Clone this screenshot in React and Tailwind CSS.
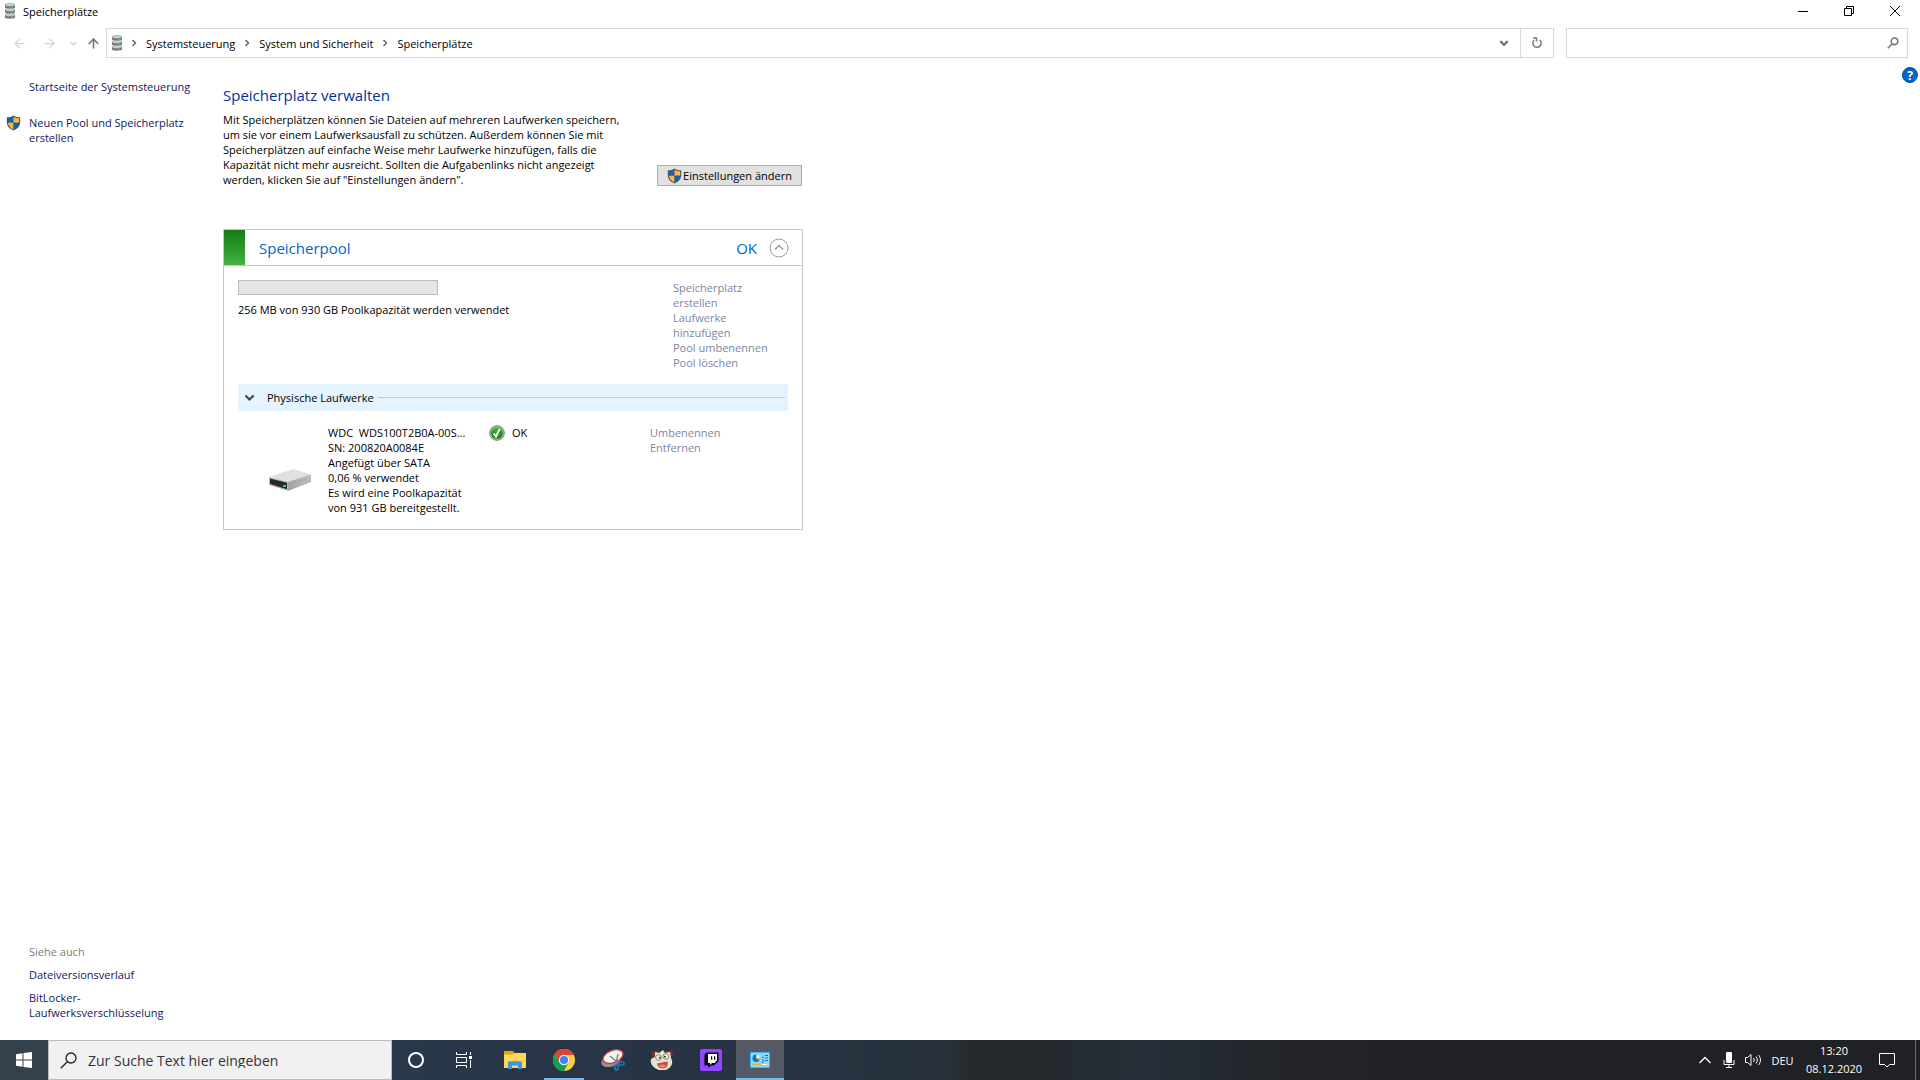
import { ArrowLeft, ArrowRight, ArrowUp } from "lucide-react";

const Stack = () => (
  <svg width="12" height="16" viewBox="0 0 12 16" className="shrink-0" aria-hidden="true">
    {[0, 5, 10].map((y) => (
      <g key={y} transform={`translate(0 ${y})`}>
        <path d="M1 2v2.600c0 1.600 10 1.600 10 0V2z" fill="#77797f" />
        <ellipse cx="6" cy="1.900" rx="5" ry="1.400" fill="#d5d6d9" stroke="#85878b" strokeWidth=".6" />
        <rect x="7" y="3.600" width="2" height="1.200" fill="#35d635" />
      </g>
    ))}
  </svg>
);

const Shield = () => (
  <svg width="15" height="16" viewBox="0 0 15 16" className="shrink-0" aria-hidden="true">
    <path d="M7.500.5C6 1.800 3.500 2.300.8 2.300V7c0 4.200 2.700 6.700 6.700 8.500C11.500 13.700 14.200 11.200 14.200 7V2.300C11.500 2.300 9 1.800 7.500.5z" fill="#4d555c" />
    <path d="M7.500 1.700C6 2.700 4 3.200 1.900 3.300V7.700H7.500z" fill="#0f63bd" />
    <path d="M7.500 1.700C9 2.700 11 3.200 13.100 3.300V7.700H7.500z" fill="#fdba38" />
    <path d="M1.900 7.700C2.200 10.700 4.200 12.800 7.500 14.400V7.700z" fill="#fdba38" />
    <path d="M13.100 7.700C12.800 10.700 10.800 12.800 7.500 14.400V7.700z" fill="#0f63bd" />
  </svg>
);

const Chevron = ({ d, size = 8, color = "#666", width = 1.5 }) => (
  <svg width={size} height={size} viewBox="0 0 8 8" fill="none" stroke={color} strokeWidth={width} className="shrink-0" aria-hidden="true">
    <path d={d} />
  </svg>
);

const DOWN = "M1 2.500l3 3 3-3";
const RIGHT = "M2.500 1l3 3-3 3";

const OkBadge = () => (
  <svg width="16" height="16" viewBox="0 0 16 16" className="shrink-0" aria-hidden="true">
    <defs>
      <linearGradient id="ok" x1="0" y1="0" x2="0" y2="1">
        <stop offset="0" stopColor="#4fc53a" />
        <stop offset=".5" stopColor="#1f9a17" />
        <stop offset="1" stopColor="#1d8614" />
      </linearGradient>
    </defs>
    <circle cx="8" cy="8" r="7.300" fill="#b9bdba" stroke="#777b78" />
    <circle cx="8" cy="8" r="6" fill="url(#ok)" />
    <path d="M4.700 8.500l2.300 3 3.700-7.500" fill="none" stroke="#fff" strokeWidth="2" />
  </svg>
);

const Drive = () => (
  <svg width="44" height="24" viewBox="0 0 44 24" className="shrink-0" aria-hidden="true">
    <defs>
      <linearGradient id="side" x1="0" y1="0" x2="1" y2="0">
        <stop offset="0" stopColor="#a3a3a6" />
        <stop offset="1" stopColor="#bcbcbf" />
      </linearGradient>
    </defs>
    <path d="M1 9L25 1l18 5.500L20 15z" fill="#e0e0e3" />
    <path d="M20 14l23-7.500V14L20 23z" fill="url(#side)" />
    <path d="M1 9l19 5v9L1 17z" fill="#b8b8ba" />
    <path d="M2 10.500l17 4.300v6.400L2 16z" fill="#26292a" />
    <rect x="15" y="17" width="3" height="2" fill="#2ee52e" />
  </svg>
);

const crumbs = ["Systemsteuerung", "System und Sicherheit", "Speicherplätze"];
const poolLinks = ["Speicherplatz erstellen", "Laufwerke hinzufügen", "Pool umbenennen", "Pool löschen"];

const TitleBar = () => (
  <header className="flex h-[22px] items-center pr-0.5 pl-1">
    <Stack />
    <h1 className="ml-[7px] flex-1">Speicherplätze</h1>
    <button aria-label="Minimieren" className="flex h-5 w-[46px] items-center justify-center">
      <svg width="10" height="10" viewBox="0 0 10 10" stroke="#000"><path d="M0 5.500h10" /></svg>
    </button>
    <button aria-label="Verkleinern" className="flex h-5 w-[46px] items-center justify-center">
      <svg width="10" height="10" viewBox="0 0 10 10" fill="none" stroke="#000">
        <path d="M.5 2.500h7v7h-7zM2.500 2.500v-2h7v7h-2" />
      </svg>
    </button>
    <button aria-label="Schließen" className="flex h-5 w-[46px] items-center justify-center">
      <svg width="10" height="10" viewBox="0 0 10 10" stroke="#000"><path d="M0 0l10 10M10 0L0 10" /></svg>
    </button>
  </header>
);

const NavBar = () => (
  <nav className="mt-1.5 flex h-[30px] items-center pr-3">
    <div className="flex w-[106px] shrink-0 items-center pl-3">
      <button aria-label="Zurück" className="w-[30px]"><ArrowLeft size={15} color="#d4d4d4" /></button>
      <button aria-label="Vorwärts" className="w-7"><ArrowRight size={15} color="#d4d4d4" /></button>
      <button aria-label="Zuletzt besucht" className="w-4"><Chevron d={DOWN} size={7} color="#ccc" /></button>
      <button aria-label="Nach oben"><ArrowUp size={15} color="#777" strokeWidth={2.5} /></button>
    </div>
    <div className="flex h-full flex-1 items-center border border-[#d9d9d9] pl-1">
      <Stack />
      <ol className="ml-[3px] flex flex-1 items-center">
        {crumbs.map((c) => (
          <li key={c} className="flex items-center">
            <span className="flex w-4 justify-center"><Chevron d={RIGHT} size={8} /></span>
            <a href="#" className="px-1">{c}</a>
          </li>
        ))}
      </ol>
      <button aria-label="Vorherige Orte" className="flex w-8 justify-center"><Chevron d={DOWN} size={10} color="#777" width={1.8} /></button>
      <button aria-label="Aktualisieren" className="flex h-full w-[33px] items-center justify-center border-l border-[#d9d9d9]">
        <svg width="12" height="12" viewBox="0 0 12 12" fill="none" stroke="#777" strokeWidth="1.500">
          <path d="M3 3.200A4.200 4.200 0 1 0 8.800 3M2 1h3.500v3.500" />
        </svg>
      </button>
    </div>
    <label className="ml-3 flex h-full w-[342px] items-center border border-[#d9d9d9] pr-2">
      <input type="search" aria-label="Systemsteuerung durchsuchen" className="h-full min-w-0 flex-1 px-2 outline-none" />
      <svg width="12" height="12" viewBox="0 0 12 12" fill="none" stroke="#777" strokeWidth="1.600">
        <circle cx="7.500" cy="4.300" r="3.300" />
        <path d="M5.200 6.800L.8 11.200" />
      </svg>
    </label>
  </nav>
);

const Sidebar = () => (
  <aside className="flex w-[223px] shrink-0 flex-col pb-5 text-[#15155e]">
    <a href="#" className="mt-[21px] ml-[29px]">Startseite der Systemsteuerung</a>
    <a href="#" className="mt-[21px] flex gap-2 pl-1.5">
      <Shield />
      <span className="w-44">Neuen Pool und Speicherplatz erstellen</span>
    </a>
    <div className="mt-auto flex w-40 flex-col gap-2 pl-[29px]">
      <h2 className="text-[#7c7c7c]">Siehe auch</h2>
      <a href="#">Dateiversionsverlauf</a>
      <a href="#">BitLocker-<br />Laufwerksverschlüsselung</a>
    </div>
  </aside>
);

const PoolCard = () => (
  <section className="mt-[42px] border border-[#c8c8c8] pb-3.5">
    <div className="flex h-9 items-center border-b border-[#c8c8c8] pr-[13px]">
      <div className="h-full w-[21px] bg-linear-to-b from-[#167a16] to-[#41b341]" />
      <h3 className="ml-3.5 flex-1 pt-px text-[15px] text-[#0066cc]">Speicherpool</h3>
      <span className="pt-px text-[15px] text-[#0066cc]">OK</span>
      <button aria-label="Pool reduzieren" className="ml-3">
        <svg width="20" height="20" viewBox="0 0 20 20" fill="none" stroke="#999">
          <circle cx="10" cy="10" r="9" />
          <path d="M6 11.500l4-4 4 4" strokeWidth="1.500" />
        </svg>
      </button>
    </div>
    <div className="px-3.5">
      <div className="flex justify-between pt-3.5">
        <div>
          <div role="progressbar" aria-label="Poolkapazität" aria-valuenow={0} className="h-[15px] w-[200px] border border-[#bcbcbc] bg-[#e6e6e6]" />
          <p className="mt-[7px]">256 MB von 930 GB Poolkapazität werden verwendet</p>
        </div>
        <ul className="w-[115px] text-[#7c86a2]">
          {poolLinks.map((l) => (
            <li key={l}><a href="#" className="block max-w-[102px]">{l}</a></li>
          ))}
        </ul>
      </div>
      <div className="mt-3.5 flex h-[27px] items-center bg-[#e5f3ff] pr-[3px] pl-1.5">
        <button className="flex items-center">
          <Chevron d={DOWN} size={11} color="#444" width={1.5} />
          <span className="ml-3">Physische Laufwerke</span>
        </button>
        <span className="ml-1 h-px flex-1 bg-[#c8c8c8]" />
      </div>
      <div className="mt-3.5 flex">
        <div className="flex w-[90px] items-center pt-5 pl-[30px]"><Drive /></div>
        <div className="w-[161px]">
          <p className="whitespace-pre">WDC  WDS100T2B0A-00S...</p>
          <p>SN: 200820A0084E</p>
          <p>Angefügt über SATA</p>
          <p>0,06 % verwendet</p>
          <p>Es wird eine Poolkapazität<br />von 931 GB bereitgestellt.</p>
        </div>
        <div className="flex h-[15px] flex-1 items-center gap-[7px]"><OkBadge />OK</div>
        <ul className="w-[138px] text-[#7c86a2]">
          <li><a href="#">Umbenennen</a></li>
          <li><a href="#">Entfernen</a></li>
        </ul>
      </div>
    </div>
  </section>
);

const Explorer = () => (
  <svg width="22" height="18" viewBox="0 0 22 18" aria-hidden="true">
    <path d="M0 0h9l1.500 2H22v15H0z" fill="#e5a50a" />
    <path d="M0 3.500h9l1.500-1.500H22v15H0z" fill="#ffd65c" />
    <path d="M4 18v-6c0-1 .8-1.800 1.800-1.800h10.400c1 0 1.800.8 1.800 1.800v6h-4v-3.500H8V18z" fill="#3a96dd" />
  </svg>
);

const Chrome = () => (
  <svg width="22" height="22" viewBox="0 0 22 22" aria-hidden="true">
    <circle cx="11" cy="11" r="11" fill="#ffcd40" />
    <path d="M1.470 5.500A11 11 0 0 1 20.840 6H11L6.700 13.500z" fill="#db4437" />
    <path d="M1.470 5.500A11 11 0 0 0 11 22l4.500-8.500L11 11 6.700 13.500z" fill="#0f9d58" />
    <circle cx="11" cy="11" r="5.200" fill="#f4f4f4" />
    <circle cx="11" cy="11" r="4.100" fill="#4285f4" />
  </svg>
);

const Snip = () => (
  <svg width="24" height="22" viewBox="0 0 24 22" fill="none" aria-hidden="true">
    <ellipse cx="10" cy="12" rx="10" ry="5.500" transform="rotate(-18 10 12)" fill="#8f9196" />
    <ellipse cx="12" cy="7.500" rx="10.500" ry="6" transform="rotate(-22 12 7.500)" fill="#f4f4f6" stroke="#d5343a" strokeWidth="1.300" />
    <path d="M9 7l8 7M17 5l-2 9" stroke="#777b82" strokeWidth="1.300" />
    <ellipse cx="20.500" cy="14.500" rx="2.800" ry="1.700" stroke="#2277b8" strokeWidth="1.600" />
    <ellipse cx="15.500" cy="18.500" rx="1.700" ry="2.600" stroke="#2277b8" strokeWidth="1.600" />
  </svg>
);

const Face = () => (
  <svg width="24" height="22" viewBox="0 0 24 22" aria-hidden="true">
    <path d="M1 2l6 0 5 2 5-2 5-1 1 5-3 4H4L2 7z" fill="#7a3028" />
    <path d="M5 3l4 1 4-3 2 3 5-1 1 6c3 5 0 10-5 12H9C3 19-1 14 1.500 9.500L5 8z" fill="#dfe6d2" />
    <circle cx="8.500" cy="8.500" r="2.800" fill="#f6f6e8" stroke="#6d665a" strokeWidth=".8" />
    <circle cx="15.800" cy="7.500" r="2.800" fill="#f6f6e8" stroke="#6d665a" strokeWidth=".8" />
    <circle cx="9.700" cy="8.700" r="1" fill="#333" />
    <circle cx="15" cy="7.700" r="1" fill="#333" />
    <path d="M7 14.500c3-.5 7-1.500 10.500-2 1 4-1 7-4.500 7S7.500 17.500 7 14.500z" fill="#cf4640" />
    <path d="M9 16.500c2-1.500 5-1.500 7 0-1 2.500-6 2.500-7 0z" fill="#ef8580" />
  </svg>
);

const Twitch = () => (
  <svg width="22" height="22" viewBox="0 0 22 22" aria-hidden="true">
    <rect width="22" height="22" rx="2" fill="#9146ff" />
    <path d="M6.500 3.500h12v8.500l-4.500 4.500h-3L8.500 19v-2.500h-4V6z" fill="#000" />
    <path d="M8 5h9v6.500L14.500 14H12l-2 2v-2H8z" fill="#fff" />
    <path d="M11 7.200h1.200v3.500H11zM14 7.200h1.200v3.500H14z" fill="#000" />
  </svg>
);

const ControlPanel = () => (
  <svg width="20" height="16" viewBox="0 0 20 16" aria-hidden="true">
    <rect width="20" height="16" rx="1" fill="#49b4ee" />
    <rect x="1" y="1" width="18" height="14" fill="#8cd5fb" />
    <circle cx="6.300" cy="6.300" r="3.800" fill="#1173c7" />
    <path d="M6.300 6.300V2.500a3.800 3.800 0 0 1 3.800 3.800z" fill="#f2fbff" />
    <path d="M6.300 6.300h3.800a3.800 3.800 0 0 1-1 2.600z" fill="#f5a623" />
    <path d="M12 5.500h2M12 8h2M12 10h2M15 3.500h3M15 6h3M15 8.500h3" stroke="#1173c7" />
    <path d="M3 12.500h8" stroke="#f5a623" />
    <path d="M12 12.500h5" stroke="#fff" />
  </svg>
);

const apps = [
  { name: "Explorer", icon: Explorer },
  { name: "Chrome", icon: Chrome, running: true },
  { name: "Ausschneiden", icon: Snip },
  { name: "Spiel", icon: Face },
  { name: "Twitch", icon: Twitch },
  { name: "Systemsteuerung", icon: ControlPanel, active: true },
];

const Taskbar = () => (
  <footer className="flex h-10 items-center bg-[linear-gradient(to_right,#36424a_0%,#28374a_21%,#273342_40%,#28313d_49%,#26292b_51%,#252a30_55%,#252e38_60%,#222326_68%,#202124_100%)] text-white">
    <button aria-label="Start" className="flex w-12 justify-center">
      <svg width="16" height="16" viewBox="0 0 16 16" fill="#fff">
        <path d="M0 2.200L6.500 1.300V7.500H0zM7.500 1.100L16 0v7.500H7.500zM0 8.500h6.500v6.200L0 13.800zM7.500 8.500H16V16l-8.500-1.100z" />
      </svg>
    </button>
    <label className="flex h-10 w-[344px] items-center border border-[#bcbcbc] bg-[#f1f1f1] pl-[11px]">
      <svg width="17" height="17" viewBox="0 0 17 17" fill="none" stroke="#222" strokeWidth="1.300">
        <circle cx="11" cy="6" r="5" />
        <path d="M7.300 9.700L.8 16.200" />
      </svg>
      <input type="text" aria-label="Suche" placeholder="Zur Suche Text hier eingeben" className="ml-[11px] min-w-0 flex-1 text-[14px] outline-none placeholder:text-[#333]" />
    </label>
    <button aria-label="Cortana" className="flex w-12 justify-center">
      <svg width="16" height="16" viewBox="0 0 16 16" fill="none" stroke="#fff" strokeWidth="2"><circle cx="8" cy="8" r="7" /></svg>
    </button>
    <button aria-label="Aktive Anwendungen" className="mr-[3px] flex w-12 justify-center">
      <svg width="16" height="16" viewBox="0 0 16 16" fill="none" stroke="#fff">
        <path d="M.5 0v2.500h10V0M.5 5.500h10v5H.5zM.5 16v-2.500h10V16M14.500 0v3M14.500 8v8" />
        <path d="M13 4h3v3h-3z" fill="#fff" stroke="none" />
      </svg>
    </button>
    <div className="flex flex-1 gap-px">
      {apps.map(({ name, icon: Icon, running, active }) => (
        <button key={name} aria-label={name} className={`relative flex h-10 w-12 items-center justify-center ${active ? "bg-[#535a65]" : ""}`}>
          <Icon />
          {running && <span className="absolute inset-x-1 bottom-0 h-0.5 bg-[#76b9ed]" />}
          {active && <span className="absolute inset-x-0 bottom-0 h-0.5 bg-[#76b9ed]" />}
        </button>
      ))}
    </div>
    <button aria-label="Ausgeblendete Symbole" className="flex w-6 justify-center">
      <svg width="12" height="8" viewBox="0 0 12 8" fill="none" stroke="#fff" strokeWidth="1.300"><path d="M.5 7L6 1.500 11.500 7" /></svg>
    </button>
    <button aria-label="Mikrofon" className="flex w-6 justify-center">
      <svg width="12" height="16" viewBox="0 0 12 16" fill="none" stroke="#fff">
        <rect x="3" y="0" width="6" height="11" rx="1" fill="#fff" stroke="none" />
        <path d="M1 8v4.500h10V8M6 12.500v3M3 15.500h6" />
      </svg>
    </button>
    <button aria-label="Lautstärke" className="flex w-6 justify-center">
      <svg width="17" height="14" viewBox="0 0 17 14" fill="none" stroke="#fff">
        <path d="M.5 4.500h2L6 1.500v11L2.500 9.500h-2z" />
        <path d="M8.500 5c1 1.200 1 2.800 0 4M11 3.500c1.800 2 1.800 5 0 7M13.500 2c2.600 3 2.600 7 0 10" />
      </svg>
    </button>
    <button className="w-[35px]">DEU</button>
    <time className="w-[68px] text-center leading-[18px]">13:20<br />08.12.2020</time>
    <button aria-label="Benachrichtigungen" className="flex w-[38px] justify-center">
      <svg width="16" height="16" viewBox="0 0 16 16" fill="none" stroke="#fff"><path d="M.5 1.500h15v11h-5L8 15l-2.500-2.500h-5z" /></svg>
    </button>
    <span className="ml-[9px] mr-1 h-10 w-px bg-[#6b6c6e]" />
  </footer>
);

const App = () => (
  <div className="flex min-h-screen flex-col bg-white font-['Open_Sans',sans-serif] text-[11px] leading-[15px] text-black">
    <TitleBar />
    <NavBar />
    <div className="flex flex-1">
      <Sidebar />
      <main className="w-[580px] pt-[26px]">
        <h2 className="text-[15px] leading-[22px] text-[#003399]">Speicherplatz verwalten</h2>
        <div className="mt-[6px] flex items-end justify-between">
          <p className="w-[410px]">
            Mit Speicherplätzen können Sie Dateien auf mehreren Laufwerken speichern,
            um sie vor einem Laufwerksausfall zu schützen. Außerdem können Sie mit
            Speicherplätzen auf einfache Weise mehr Laufwerke hinzufügen, falls die
            Kapazität nicht mehr ausreicht. Sollten die Aufgabenlinks nicht angezeigt
            werden, klicken Sie auf "Einstellungen ändern".
          </p>
          <button className="mr-px mb-px flex h-[21px] w-[145px] items-center justify-center gap-px border border-[#adadad] bg-[#e1e1e1]">
            <Shield />Einstellungen ändern
          </button>
        </div>
        <PoolCard />
      </main>
      <button aria-label="Hilfe" className="mt-[9px] mr-0.5 ml-auto flex size-4 items-center justify-center rounded-full border border-[#00508f] bg-[#0066cc] text-[12px] font-bold text-white">?</button>
    </div>
    <Taskbar />
  </div>
);

export default App;
